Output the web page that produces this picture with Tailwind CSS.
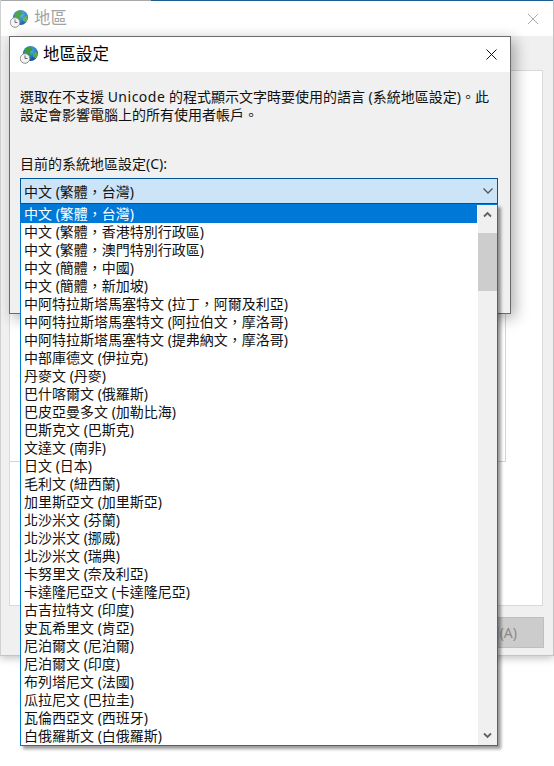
<!DOCTYPE html>
<html lang="zh-Hant">
<head>
    <meta charset="UTF-8">
    <meta name="viewport" content="width=device-width, initial-scale=1.0">
    <title>地區設定</title>
    <script src="https://cdn.jsdelivr.net/npm/@tailwindcss/browser@4"></script>
</head>
<body class="bg-white">
<div class="relative w-[554px] h-[766px] overflow-hidden font-['Noto_Sans','Noto_Sans_CJK_TC',sans-serif] text-[14px] text-[#111]">

    <svg width="0" height="0" class="absolute">
        <defs>
            <radialGradient id="sea" cx="50%" cy="30%" r="75%">
                <stop offset="0" stop-color="#58b8f2"/>
                <stop offset="0.6" stop-color="#1c6fc0"/>
                <stop offset="1" stop-color="#0d3f86"/>
            </radialGradient>
            <g id="globe-clock">
                <circle cx="10.500" cy="7.500" r="7.500" fill="url(#sea)"/>
                <path d="M5 3c2-2 4.500-2.600 6.500-1.800L13 3.500 10 6l.8 3-3 1.500L4.500 8z" fill="#3c9a38"/>
                <path d="M13 7.500l3.500-2 1.300 3-2 4-2.800-2z" fill="#52b044"/>
                <circle cx="5" cy="12.500" r="4.800" fill="#f4f4f4" stroke="#8c8c8c"/>
                <path d="M5 9.500v3h2.500" fill="none" stroke="#555" stroke-width="0.900"/>
            </g>
        </defs>
    </svg>

    <!-- 後面的地區視窗 -->
    <div class="absolute left-0 top-0 w-[554px] h-[656px] flex flex-col bg-[#f0f0f0] border-l border-r border-b border-l-[#d0d0d0] border-r-[#c4c4c4] border-b-[#c4c4c4] shadow-[0_2px_8px_rgba(0,0,0,0.25)]">
        <div class="h-px flex shrink-0">
            <div class="w-[150px] bg-[#a8a8a8]"></div>
            <div class="flex-1 bg-[#1c5f94]"></div>
        </div>
        <div class="h-[35px] bg-white flex items-center pl-[9px] pr-[14px] shrink-0">
            <svg width="18" height="18" viewBox="0 0 18 18" class="opacity-90"><use href="#globe-clock"/></svg>
            <span class="ml-[6px] text-[16.500px] text-[#a3a3a3]">地區</span>
            <svg width="12" height="12" viewBox="0 0 12 12" class="ml-auto"><path d="M1 1l10 10M11 1L1 11" stroke="#ababab" stroke-width="1"/></svg>
        </div>
        <div class="flex-1 flex flex-col pl-[8px] pr-[10px] pt-[34px] pb-[8px]">
            <div class="h-[536px] bg-white border border-[#d9d9d9] pr-[36px]">
                <div class="h-[391px] border-r border-b border-[#d4d4d4]"></div>
            </div>
            <div class="flex justify-end mt-[11px] -mr-px">
                <div class="w-[102px] h-[31px] bg-[#cccccc] border border-[#bfbfbf] flex items-center justify-end pr-[26px] text-[#8a8a8a]">套用(A)</div>
            </div>
        </div>
    </div>

    <!-- 地區設定對話框 -->
    <div class="absolute left-[9px] top-[36px] w-[502px] h-[278px] flex flex-col bg-[#f0f0f0] border border-[#6b6b6b] shadow-[4px_4px_14px_rgba(0,0,0,0.32)]">
        <div class="h-[35px] bg-white flex items-center pl-[10px] pr-[13px] shrink-0">
            <svg width="18" height="18" viewBox="0 0 18 18"><use href="#globe-clock"/></svg>
            <span class="ml-[5px] text-[16.500px] text-black">地區設定</span>
            <svg width="11" height="11" viewBox="0 0 11 11" class="ml-auto"><path d="M0.500 0.500l10 10M10.500 0.500l-10 10" stroke="#111" stroke-width="1"/></svg>
        </div>
        <div class="flex flex-col pl-[10px] pr-[12px] pt-[16px]">
            <p class="leading-[18px] whitespace-nowrap">選取在不支援 <span class="tracking-[0.500px]">Unicode</span> 的程式顯示文字時要使用的語言 (系統地區設定)。此<br>設定會影響電腦上的所有使用者帳戶。</p>
            <p class="mt-[31px] leading-[18px]">目前的系統地區設定(C):</p>
            <div class="mt-[5px] h-[26px] bg-[#cce4f7] border border-[#005499] flex items-center pl-[3px] pr-[3px]">
                <span>中文 (繁體，台灣)</span>
                <svg width="12" height="8" viewBox="0 0 12 8" class="ml-auto"><path d="M1.500 1.500L6 6l4.500-4.500" fill="none" stroke="#555" stroke-width="1.300"/></svg>
            </div>
        </div>
    </div>

    <!-- 下拉清單 -->
    <div class="absolute left-[20px] top-[204px] w-[478px] h-[542px] flex bg-white border border-[#0078d7] shadow-[3px_3px_3px_rgba(0,0,0,0.4)]">
        <ul class="w-[456px] flex flex-col leading-[18px]">
            <li class="h-[18px] pl-[3px] bg-[#0078d7] text-white">中文 (繁體，台灣)</li>
            <li class="h-[18px] pl-[3px]">中文 (繁體，香港特別行政區)</li>
            <li class="h-[18px] pl-[3px]">中文 (繁體，澳門特別行政區)</li>
            <li class="h-[18px] pl-[3px]">中文 (簡體，中國)</li>
            <li class="h-[18px] pl-[3px]">中文 (簡體，新加坡)</li>
            <li class="h-[18px] pl-[3px]">中阿特拉斯塔馬塞特文 (拉丁，阿爾及利亞)</li>
            <li class="h-[18px] pl-[3px]">中阿特拉斯塔馬塞特文 (阿拉伯文，摩洛哥)</li>
            <li class="h-[18px] pl-[3px]">中阿特拉斯塔馬塞特文 (提弗納文，摩洛哥)</li>
            <li class="h-[18px] pl-[3px]">中部庫德文 (伊拉克)</li>
            <li class="h-[18px] pl-[3px]">丹麥文 (丹麥)</li>
            <li class="h-[18px] pl-[3px]">巴什喀爾文 (俄羅斯)</li>
            <li class="h-[18px] pl-[3px]">巴皮亞曼多文 (加勒比海)</li>
            <li class="h-[18px] pl-[3px]">巴斯克文 (巴斯克)</li>
            <li class="h-[18px] pl-[3px]">文達文 (南非)</li>
            <li class="h-[18px] pl-[3px]">日文 (日本)</li>
            <li class="h-[18px] pl-[3px]">毛利文 (紐西蘭)</li>
            <li class="h-[18px] pl-[3px]">加里斯亞文 (加里斯亞)</li>
            <li class="h-[18px] pl-[3px]">北沙米文 (芬蘭)</li>
            <li class="h-[18px] pl-[3px]">北沙米文 (挪威)</li>
            <li class="h-[18px] pl-[3px]">北沙米文 (瑞典)</li>
            <li class="h-[18px] pl-[3px]">卡努里文 (奈及利亞)</li>
            <li class="h-[18px] pl-[3px]">卡達隆尼亞文 (卡達隆尼亞)</li>
            <li class="h-[18px] pl-[3px]">古吉拉特文 (印度)</li>
            <li class="h-[18px] pl-[3px]">史瓦希里文 (肯亞)</li>
            <li class="h-[18px] pl-[3px]">尼泊爾文 (尼泊爾)</li>
            <li class="h-[18px] pl-[3px]">尼泊爾文 (印度)</li>
            <li class="h-[18px] pl-[3px]">布列塔尼文 (法國)</li>
            <li class="h-[18px] pl-[3px]">瓜拉尼文 (巴拉圭)</li>
            <li class="h-[18px] pl-[3px]">瓦倫西亞文 (西班牙)</li>
            <li class="h-[18px] pl-[3px]">白俄羅斯文 (白俄羅斯)</li>
        </ul>
        <div class="ml-auto w-[19px] bg-[#f0f0f0] flex flex-col">
            <div class="h-[28px] flex justify-center pt-[6px]">
                <svg width="9" height="7" viewBox="0 0 9 7"><path d="M1 5.500L4.500 2 8 5.500" fill="none" stroke="#606060" stroke-width="1.800"/></svg>
            </div>
            <div class="h-[58px] bg-[#cdcdcd]"></div>
            <div class="flex-1 flex items-end justify-center pb-[6px]">
                <svg width="9" height="7" viewBox="0 0 9 7"><path d="M1 1.500L4.500 5 8 1.500" fill="none" stroke="#606060" stroke-width="1.800"/></svg>
            </div>
        </div>
    </div>
</div>
</body>
</html>
